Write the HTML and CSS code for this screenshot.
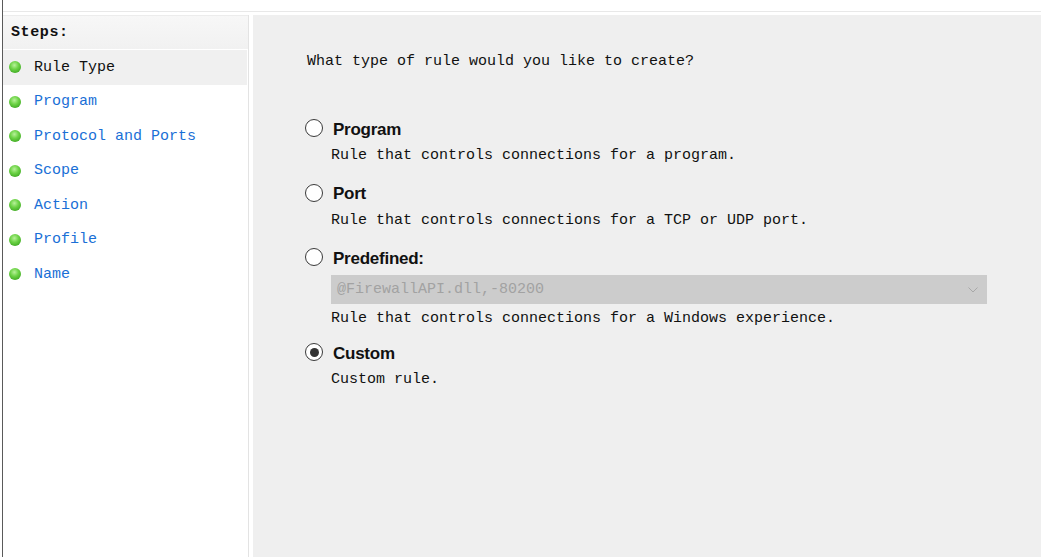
FILE: index.html
```html
<!DOCTYPE html>
<html lang="en">
<head>
<meta charset="utf-8">
<title>New Inbound Rule Wizard</title>
<link rel="stylesheet" href="styles.css">
</head>
<body>
<div class="edge"></div>
<div class="window">
  <div class="topband"></div>
  <div class="main">
    <aside class="steps">
      <div class="steps-head">Steps:</div>
      <ul class="step-list">
        <li class="step step--current"><span class="dot"></span>Rule Type</li>
        <li class="step"><span class="dot"></span>Program</li>
        <li class="step"><span class="dot"></span>Protocol and Ports</li>
        <li class="step"><span class="dot"></span>Scope</li>
        <li class="step"><span class="dot"></span>Action</li>
        <li class="step"><span class="dot"></span>Profile</li>
        <li class="step"><span class="dot"></span>Name</li>
      </ul>
    </aside>
    <section class="content">
      <p class="question">What type of rule would you like to create?</p>
      <div class="options">
        <div class="option">
          <div class="opt-head"><span class="radio"></span><span class="opt-label">Program</span></div>
          <div class="opt-desc">Rule that controls connections for a program.</div>
        </div>
        <div class="option">
          <div class="opt-head"><span class="radio"></span><span class="opt-label">Port</span></div>
          <div class="opt-desc">Rule that controls connections for a TCP or UDP port.</div>
        </div>
        <div class="option">
          <div class="opt-head"><span class="radio"></span><span class="opt-label">Predefined:</span></div>
          <div class="combo">
            <span class="combo-text">@FirewallAPI.dll,-80200</span>
            <svg class="chev" width="10" height="6" viewBox="0 0 10 6"><polyline points="0.5,0.5 5,5 9.5,0.5" fill="none" stroke="#a8a8a8" stroke-width="1"/></svg>
          </div>
          <div class="opt-desc opt-desc--flush">Rule that controls connections for a Windows experience.</div>
        </div>
        <div class="option">
          <div class="opt-head"><span class="radio radio--on"></span><span class="opt-label">Custom</span></div>
          <div class="opt-desc">Custom rule.</div>
        </div>
      </div>
    </section>
  </div>
</div>
</body>
</html>
```
FILE: styles.css
```css
* { box-sizing: border-box; }
html, body { height: 100%; }
body {
  margin: 0;
  background: #ffffff;
  display: flex;
  overflow: hidden;
  font-family: "Liberation Mono", "DejaVu Sans Mono", monospace;
  font-size: 15px;
  color: #111;
}
.edge {
  width: 3px;
  flex: none;
  background: #fff;
  border-right: 1px solid #5a5a5a;
}
.window {
  flex: 1;
  display: flex;
  flex-direction: column;
  min-width: 0;
}
.topband {
  height: 15px;
  flex: none;
  background: #fff;
  border-top: 11px solid #fff;
}
.topband::after {
  content: "";
  display: block;
  height: 1px;
  background: #e8e8e8;
}
.main {
  flex: 1;
  display: flex;
}
.steps {
  width: 246px;
  flex: none;
  background: #fff;
  border-right: 1px solid #e3e3e3;
  margin-right: 4px;
}
.steps-head {
  height: 35px;
  padding-left: 8px;
  line-height: 33px;
  font-weight: bold;
  letter-spacing: 0.6px;
  background: linear-gradient(#f7f7f7, #f1f1f1);
  border-top: 1px solid #ececec;
  border-bottom: 1px solid #fff;
  color: #111;
}
.step-list {
  list-style: none;
  margin: 0;
  padding: 0;
}
.step {
  height: 34.5px;
  display: flex;
  align-items: center;
  padding-left: 6px;
  color: #1a6fd6;
  margin-right: 1px;
}
.step--current {
  background: #f0f0f0;
  color: #111;
}
.dot {
  width: 12px;
  height: 12px;
  border-radius: 50%;
  margin-right: 13px;
  background: radial-gradient(circle at 45% 35%, #b8f19a 0%, #6dd346 40%, #3aa51f 85%);
}
.content {
  flex: 1;
  background: #efefef;
  padding: 37px 0 0 52px;
}
.question {
  margin: 0 0 0 2px;
  line-height: 20px;
  color: #111;
}
.options {
  margin-top: 43px;
  width: 682px;
  display: flex;
  flex-direction: column;
  gap: 11.5px;
}
.opt-head {
  height: 26px;
  display: flex;
  align-items: center;
}
.radio {
  width: 18px;
  height: 18px;
  border-radius: 50%;
  border: 1.5px solid #3a3a3a;
  background: #fff;
  margin-right: 10px;
  display: flex;
  align-items: center;
  justify-content: center;
  flex: none;
}
.radio--on::after {
  content: "";
  width: 9px;
  height: 9px;
  border-radius: 50%;
  background: #333;
}
.opt-label {
  font-family: "Liberation Sans", Arial, sans-serif;
  font-weight: bold;
  font-size: 17px;
  letter-spacing: -0.25px;
  color: #111;
  padding-top: 3px;
}
.opt-desc {
  margin-left: 26px;
  padding-top: 3px;
  line-height: 24px;
  color: #111;
}
.opt-desc--flush {
  padding-top: 3.5px;
  line-height: 19px;
}
.combo {
  margin: 5px 0 1px 26px;
  height: 29px;
  background: #cccccc;
  display: flex;
  align-items: center;
  justify-content: space-between;
  padding: 0 9px 0 6px;
  color: #a2a2a2;
}
.chev { display: block; margin-top: 1px; }
```
